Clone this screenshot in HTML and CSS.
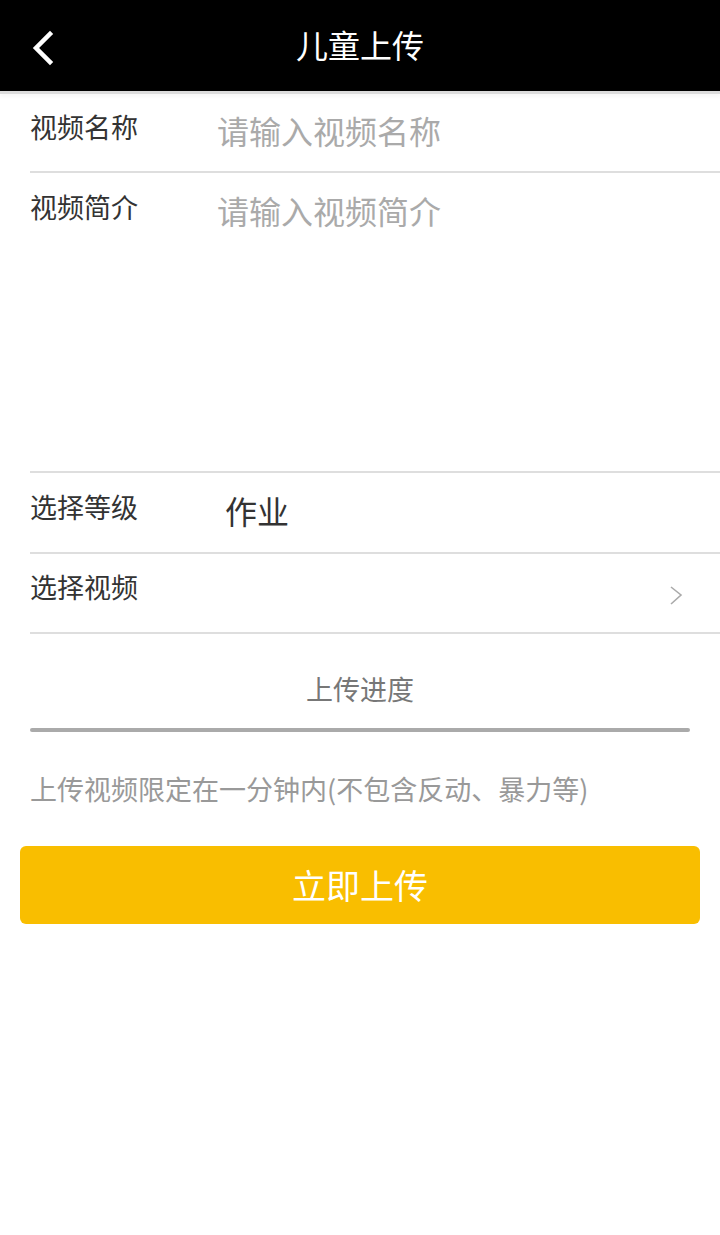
FILE: index.html
```html
<!DOCTYPE html>
<html lang="zh-CN">
<head>
<meta charset="utf-8">
<title>儿童上传</title>
<link rel="stylesheet" href="styles.css">
</head>
<body>
<header class="topbar">
  <svg class="back" width="30" height="40" viewBox="0 0 30 40"><polyline points="20,4 6,18 20,32" fill="none" stroke="#fff" stroke-width="4.5" stroke-linecap="square"/></svg>
  <h1 class="title">儿童上传</h1>
</header>
<div class="shadow"></div>
<main class="form">
  <div class="row row-name">
    <span class="label">视频名称</span>
    <span class="placeholder">请输入视频名称</span>
  </div>
  <div class="row row-desc">
    <span class="label">视频简介</span>
    <span class="placeholder">请输入视频简介</span>
  </div>
  <div class="row row-level">
    <span class="label">选择等级</span>
    <span class="value">作业</span>
  </div>
  <div class="row row-video">
    <span class="label">选择视频</span>
    <svg class="arrow" width="16" height="24" viewBox="0 0 16 24"><polyline points="3,3 13,11 3,20" fill="none" stroke="#aaa" stroke-width="1.6"/></svg>
  </div>
</main>
<section class="progress">
  <p class="progress-title">上传进度</p>
  <div class="bar"></div>
  <p class="note">上传视频限定在一分钟内(不包含反动、暴力等)</p>
  <button class="submit">立即上传</button>
</section>
</body>
</html>
```
FILE: styles.css
```css
* { box-sizing: border-box; }
html, body { margin: 0; padding: 0; background: #fff; }
body {
  font-family: "Noto Sans CJK SC", "Noto Sans", sans-serif;
  width: 720px;
}
.topbar {
  position: relative;
  height: 91px;
  background: #000;
  display: flex;
  align-items: center;
  justify-content: center;
}
.back {
  position: absolute;
  left: 30px;
  top: 30px;
}
.title {
  margin: 0 0 4px;
  color: #fff;
  font-size: 32px;
  font-weight: 400;
  line-height: 40px;
}
.shadow {
  height: 3px;
  background: #dcdcdc;
  box-shadow: 0 2px 4px rgba(0,0,0,0.06);
}
.form {
  padding-left: 30px;
}
.row {
  display: flex;
  align-items: flex-start;
  border-bottom: 2px solid #dedede;
  padding-top: 20px;
}
.row-name { height: 79px; padding-top: 18px; }
.row-desc { height: 300px; padding-top: 19px; }
.row-level { height: 81px; padding-top: 19px; }
.row-video { height: 80px; padding-top: 18px; }
.label {
  width: 187px;
  flex: none;
  font-size: 27px;
  line-height: 30px;
  color: #333;
}
.placeholder {
  font-size: 32px;
  line-height: 36px;
  color: #aaa;
}
.value {
  margin-left: 8px;
  font-size: 32px;
  line-height: 36px;
  color: #333;
}
.arrow {
  margin-left: auto;
  margin-right: 36px;
  margin-top: 12px;
}
.progress {
  padding: 0 30px;
  display: flex;
  flex-direction: column;
}
.progress-title {
  margin: 37px 0 0;
  text-align: center;
  font-size: 27px;
  line-height: 36px;
  color: #777;
}
.bar {
  margin-top: 21px;
  height: 4px;
  border-radius: 2px;
  background: #aaa;
}
.note {
  margin: 39px 0 0;
  font-size: 27px;
  line-height: 36px;
  color: #999;
  white-space: nowrap;
}
.submit {
  margin: 39px -10px 0;
  height: 78px;
  border: none;
  border-radius: 6px;
  background: #f9be00;
  color: #fff;
  font-family: inherit;
  font-size: 34px;
  line-height: 40px;
}
```
